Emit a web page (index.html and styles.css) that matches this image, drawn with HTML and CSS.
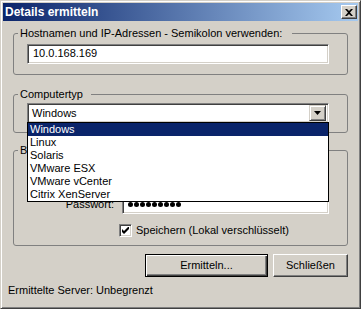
FILE: index.html
```html
<!DOCTYPE html>
<html lang="de">
<head>
  <meta charset="UTF-8">
  <title>Details ermitteln</title>
  <link rel="stylesheet" href="styles.css">
</head>
<body>
  <div class="window">
    <div class="titlebar">
      <span class="title">Details ermitteln</span>
      <span class="close-btn">
        <svg width="8" height="7" viewBox="0 0 8 7"><path d="M0 0h2l2 2 2-2h2L5 3.5 8 7H6L4 5 2 7H0l3-3.5z" fill="#000"/></svg>
      </span>
    </div>

    <!-- Hosts -->
    <fieldset class="group group-hosts">
      <legend class="legend-wide">Hostnamen und IP-Adressen - Semikolon verwenden:</legend>
      <div class="field field-text">10.0.168.169</div>
    </fieldset>

    <!-- Computertyp -->
    <fieldset class="group group-type">
      <legend>Computertyp</legend>
      <div class="combo">
        <span class="combo-value">Windows</span>
        <span class="combo-btn">
          <svg width="7" height="4" viewBox="0 0 7 4"><path d="M0 0h7L3.5 4z" fill="#000"/></svg>
        </span>
        <ul class="combo-list">
          <li class="selected">Windows</li>
          <li>Linux</li>
          <li>Solaris</li>
          <li>VMware ESX</li>
          <li>VMware vCenter</li>
          <li>Citrix XenServer</li>
        </ul>
      </div>
    </fieldset>

    <!-- Anmeldung (oberes Feld liegt unter der Liste) -->
    <fieldset class="group group-login">
      <legend>B</legend>
      <div class="form-row">
        <label></label>
        <div class="field field-short"></div>
      </div>
      <div class="form-row">
        <label>Passwort:</label>
        <div class="field field-short dots">
          <i></i><i></i><i></i><i></i><i></i><i></i><i></i><i></i><i></i>
        </div>
      </div>
      <div class="check-row">
        <span class="checkbox">
          <svg width="7" height="7" viewBox="0 0 7 7"><path d="M0 2v3l2 2 5-5V-1L2 4z" fill="#000"/></svg>
        </span>
        <span>Speichern (Lokal verschlüsselt)</span>
      </div>
    </fieldset>

    <div class="buttons">
      <button class="btn btn-default">Ermitteln...</button>
      <button class="btn">Schließen</button>
    </div>

    <div class="status">Ermittelte Server: Unbegrenzt</div>
  </div>
</body>
</html>
```

FILE: styles.css
```css
body {
  margin: 0;
  font-family: "Liberation Sans", Arial, sans-serif;
  font-size: 11px;
  line-height: 13px;
  color: #000;
}

.window {
  width: 361px;
  height: 309px;
  box-sizing: border-box;
  background-color: #d4d0c8;
  border: 1px solid;
  border-color: #d4d0c8 #404040 #404040 #d4d0c8;
  box-shadow: inset 1px 1px #fff, inset -1px -1px #808080;
  padding: 2px;
}

.titlebar {
  height: 18px;
  display: flex;
  align-items: center;
  justify-content: space-between;
  padding: 0 1px 0 2px;
  background: linear-gradient(to right, #0a246a, #a6caf0);
}

.title {
  color: #fff;
  font-weight: bold;
  font-size: 12px;
}

.close-btn {
  width: 16px;
  height: 14px;
  box-sizing: border-box;
  display: flex;
  align-items: center;
  justify-content: center;
  background-color: #d4d0c8;
  border: 1px solid;
  border-color: #fff #404040 #404040 #fff;
  box-shadow: inset -1px -1px #808080;
}

.group {
  margin: 6px 10px 0 10px;
  padding: 4px 0 10px 0;
  border: 1px solid #808080;
  border-radius: 3px;
}

.group legend {
  margin-left: 4px;
  padding: 0 8px 0 2px;
}

.group legend.legend-wide {
  padding-right: 10px;
}

.group-type {
  margin-top: 13px;
  padding: 2px 0 9px 0;
}

.group-login {
  margin-top: 11px;
  padding: 12px 0 8px 0;
}

.field, .combo {
  height: 20px;
  box-sizing: border-box;
  border: 1px solid;
  border-color: #808080 #fff #fff #808080;
  box-shadow: inset 1px 1px #404040, inset -1px -1px #d4d0c8;
  background-color: #fff;
}

.field-text {
  width: 302px;
  margin-left: 13px;
  padding: 2px 0 0 5px;
}

.combo {
  position: relative;
  width: 302px;
  margin-left: 13px;
  display: flex;
  align-items: center;
  justify-content: space-between;
  padding: 2px;
}

.combo-value {
  padding-left: 2px;
}

.combo-btn {
  width: 17px;
  height: 16px;
  box-sizing: border-box;
  display: flex;
  align-items: center;
  justify-content: center;
  background-color: #d4d0c8;
  border: 1px solid;
  border-color: #d4d0c8 #404040 #404040 #d4d0c8;
  box-shadow: inset 1px 1px #fff, inset -1px -1px #808080;
}

.combo-list {
  position: absolute;
  top: 100%;
  left: -1px;
  width: 302px;
  box-sizing: border-box;
  margin: 0;
  padding: 0;
  list-style: none;
  border: 1px solid #000;
  background-color: #fff;
  z-index: 2;
}

.combo-list li {
  height: 13px;
  padding-left: 2px;
}

.combo-list li.selected {
  background-color: #0a246a;
  color: #fff;
}

.form-row {
  display: flex;
  align-items: center;
  margin-bottom: 5px;
}

.form-row label {
  width: 100px;
  margin-right: 8px;
  text-align: right;
}

.field-short {
  width: 207px;
}

.dots {
  display: flex;
  align-items: center;
  gap: 1px;
  padding-left: 5px;
}

.dots i {
  width: 5px;
  height: 5px;
  border-radius: 50%;
  background-color: #000;
}

.check-row {
  display: flex;
  align-items: center;
  gap: 4px;
  margin: 10px 0 0 105px;
}

.checkbox {
  width: 13px;
  height: 13px;
  box-sizing: border-box;
  display: flex;
  align-items: center;
  justify-content: center;
  background-color: #fff;
  border: 1px solid;
  border-color: #808080 #fff #fff #808080;
  box-shadow: inset 1px 1px #404040, inset -1px -1px #d4d0c8;
}

.buttons {
  display: flex;
  justify-content: flex-end;
  gap: 5px;
  margin: 8px 10px 0 0;
}

.btn {
  width: 75px;
  height: 23px;
  box-sizing: border-box;
  font: inherit;
  color: #000;
  background-color: #d4d0c8;
  border: 1px solid;
  border-color: #fff #404040 #404040 #fff;
  box-shadow: inset -1px -1px #808080;
  padding: 0;
}

.btn-default {
  width: 123px;
  border-color: #000;
  box-shadow: inset 1px 1px #fff, inset -1px -1px #404040, inset -2px -2px #808080;
}

.status {
  margin: 7px 0 0 5px;
}
```
